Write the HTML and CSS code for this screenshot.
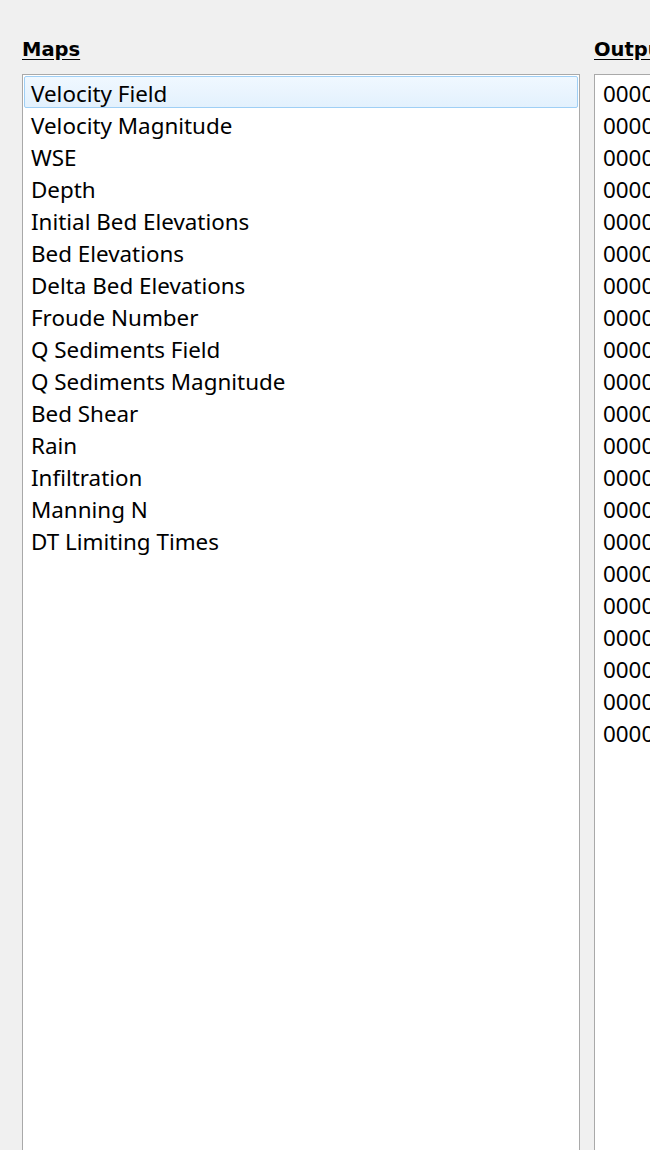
FILE: index.html
```html
<!DOCTYPE html>
<html lang="en">

<head>
    <meta charset="UTF-8">
    <meta name="viewport" content="width=device-width, initial-scale=1.0">
    <title>Results</title>
    <link rel="stylesheet" href="styles.css">
</head>

<body>
    <div class="panels">
        <div class="panel maps">
            <div class="caption">Maps</div>
            <ul class="listbox">
                <li class="selected">Velocity Field</li>
                <li>Velocity Magnitude</li>
                <li>WSE</li>
                <li>Depth</li>
                <li>Initial Bed Elevations</li>
                <li>Bed Elevations</li>
                <li>Delta Bed Elevations</li>
                <li>Froude Number</li>
                <li>Q Sediments Field</li>
                <li>Q Sediments Magnitude</li>
                <li>Bed Shear</li>
                <li>Rain</li>
                <li>Infiltration</li>
                <li>Manning N</li>
                <li>DT Limiting Times</li>
            </ul>
        </div>
        <div class="panel outputs">
            <div class="caption">Outputs</div>
            <ul class="listbox" id="times"></ul>
        </div>
    </div>
    <script>
        // output times list, 21 entries
        var times = document.getElementById('times');
        for (var i = 0; i < 21; i++) {
            var li = document.createElement('li');
            li.textContent = '0000:00:00:00';
            times.appendChild(li);
        }
    </script>
</body>

</html>
```

FILE: styles.css
```css
* {
    margin: 0;
    padding: 0;
}

html,
body {
    height: 100%;
    overflow: hidden;
}

body {
    background: #f0f0f0;
    font-family: "Noto Sans", "Open Sans", sans-serif;
    color: #000;
}

.panels {
    display: flex;
    gap: 14px;
    padding: 36px 0 0 22px;
    height: 1250px;
    box-sizing: border-box;
}

.panel {
    display: flex;
    flex-direction: column;
    flex-shrink: 0;
}

.maps {
    width: 558px;
}

.outputs {
    width: 300px;
}

.caption {
    font-family: "DejaVu Sans", sans-serif;
    font-weight: bold;
    font-size: 19.5px;
    text-decoration: underline;
    text-underline-offset: 3px;
    line-height: 27px;
    height: 38px;
    flex-shrink: 0;
}

.listbox {
    list-style: none;
    background: #fff;
    border: 1px solid #a9a9a9;
    padding: 1px;
    flex: 1;
    font-size: 22.4px;
}

.listbox li {
    height: 32px;
    line-height: 30px;
    padding: 2px 0 0 6px;
    white-space: nowrap;
    border: 1px solid transparent;
    box-sizing: border-box;
}

.listbox li.selected {
    background: linear-gradient(#f0f8ff, #e3f1fd);
    border-color: #9fcff5;
    border-radius: 2px;
}
```
